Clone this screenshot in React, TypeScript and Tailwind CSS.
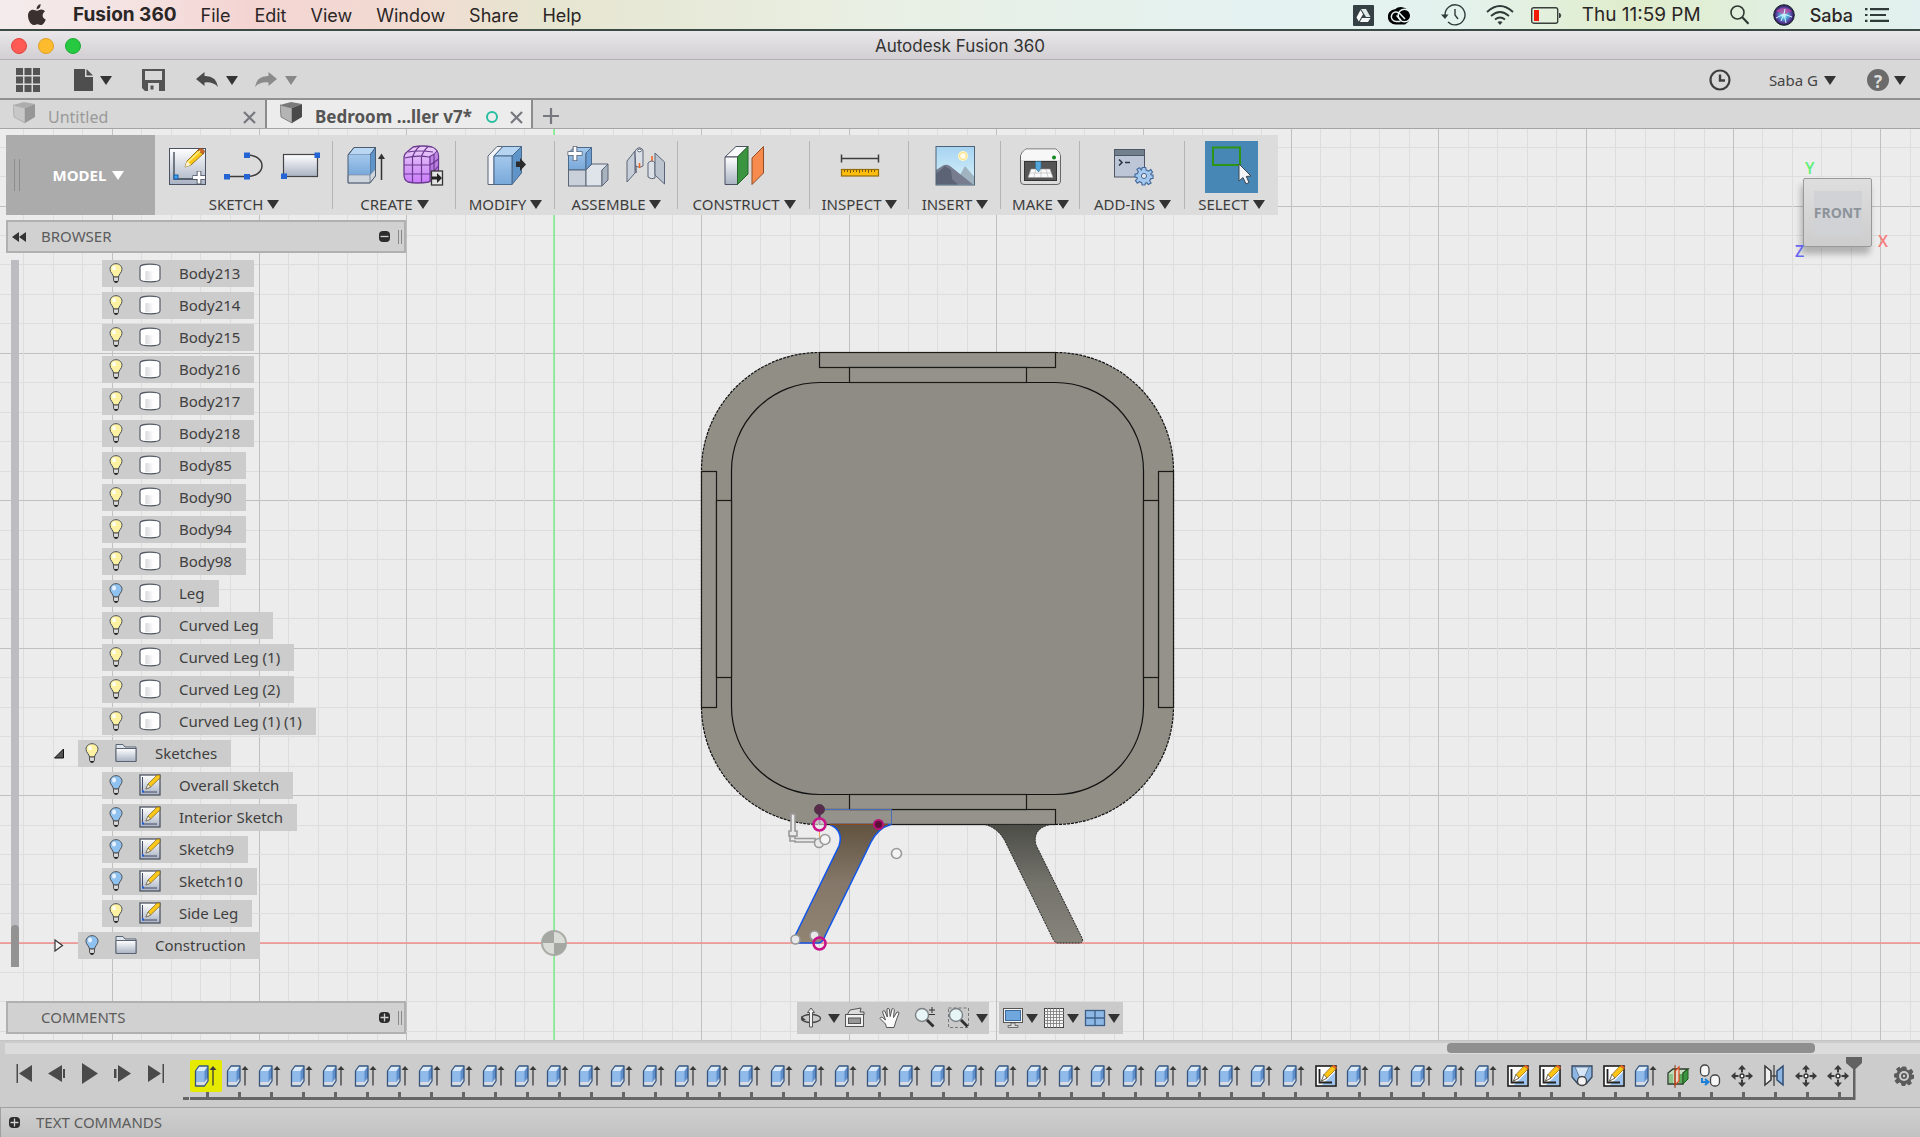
import type { ReactNode } from 'react'

const menus = ['File', 'Edit', 'View', 'Window', 'Share', 'Help']

type Row = { name: string; icon: 'body' | 'sketch' | 'folder'; on: boolean; open?: boolean }

const rows: Row[] = [
  { name: 'Body213', icon: 'body', on: true },
  { name: 'Body214', icon: 'body', on: true },
  { name: 'Body215', icon: 'body', on: true },
  { name: 'Body216', icon: 'body', on: true },
  { name: 'Body217', icon: 'body', on: true },
  { name: 'Body218', icon: 'body', on: true },
  { name: 'Body85', icon: 'body', on: true },
  { name: 'Body90', icon: 'body', on: true },
  { name: 'Body94', icon: 'body', on: true },
  { name: 'Body98', icon: 'body', on: true },
  { name: 'Leg', icon: 'body', on: false },
  { name: 'Curved Leg', icon: 'body', on: true },
  { name: 'Curved Leg (1)', icon: 'body', on: true },
  { name: 'Curved Leg (2)', icon: 'body', on: true },
  { name: 'Curved Leg (1) (1)', icon: 'body', on: true },
  { name: 'Sketches', icon: 'folder', on: true, open: true },
  { name: 'Overall Sketch', icon: 'sketch', on: false },
  { name: 'Interior Sketch', icon: 'sketch', on: false },
  { name: 'Sketch9', icon: 'sketch', on: false },
  { name: 'Sketch10', icon: 'sketch', on: false },
  { name: 'Side Leg', icon: 'sketch', on: true },
  { name: 'Construction', icon: 'folder', on: false, open: false },
]

const timeline = [
  ...Array(35).fill('extrude'),
  'sketch',
  ...Array(5).fill('extrude'),
  'sketch', 'sketch', 'loft', 'sketch', 'extrude', 'split', 'copy', 'move', 'mirror', 'move', 'move',
] as string[]

function Caret({ className = 'text-[#333]' }: { className?: string }) {
  return (
    <svg className={`shrink-0 ${className}`} width="12" height="9" viewBox="0 0 12 9" fill="currentColor">
      <path d="M0 0H12L6 9Z" />
    </svg>
  )
}

/* Shared gradients */
function Defs() {
  return (
    <svg className="absolute" width="0" height="0" aria-hidden="true">
      <defs>
        <linearGradient id="steel" x1="0" y1="0" x2="0" y2="1">
          <stop offset="0" stopColor="#ffffff" />
          <stop offset="1" stopColor="#a9b2c3" />
        </linearGradient>
        <linearGradient id="blue" x1="0" y1="0" x2="0" y2="1">
          <stop offset="0" stopColor="#a4c8ec" />
          <stop offset="1" stopColor="#78a8da" />
        </linearGradient>
        <linearGradient id="violet" x1="0" y1="0" x2="0" y2="1">
          <stop offset="0" stopColor="#ecd0fb" />
          <stop offset="0.6" stopColor="#d49bf7" />
          <stop offset="1" stopColor="#cc7cff" />
        </linearGradient>
        <linearGradient id="can" x1="0" y1="0" x2="1" y2="0">
          <stop offset="0.2" stopColor="#ffffff" />
          <stop offset="0.28" stopColor="#dcdce0" />
          <stop offset="0.7" stopColor="#ffffff" />
        </linearGradient>
        <linearGradient id="sky" x1="0" y1="0" x2="0" y2="1">
          <stop offset="0" stopColor="#a6d3f2" />
          <stop offset="1" stopColor="#d9f3f8" />
        </linearGradient>
        <linearGradient id="legSel" x1="0" y1="0" x2="0" y2="1">
          <stop offset="0" stopColor="#62533f" />
          <stop offset="0.5" stopColor="#85786a" />
          <stop offset="1" stopColor="#918471" />
        </linearGradient>
        <linearGradient id="leg" x1="0" y1="0" x2="0" y2="1">
          <stop offset="0" stopColor="#4d4d48" />
          <stop offset="0.5" stopColor="#74736c" />
          <stop offset="1" stopColor="#86847b" />
        </linearGradient>
        <radialGradient id="siri">
          <stop offset="0" stopColor="#e6f6ff" />
          <stop offset="0.35" stopColor="#4fb3dc" />
          <stop offset="0.75" stopColor="#5b3c9e" />
          <stop offset="1" stopColor="#1b1c3c" />
        </radialGradient>
      </defs>
    </svg>
  )
}

function Icon({ children, size = 40, box = 40 }: { children: ReactNode; size?: number; box?: number }) {
  return (
    <svg className="shrink-0 overflow-visible" width={size} height={size} viewBox={`0 0 ${box} ${box}`} fill="none">
      {children}
    </svg>
  )
}

const SketchIcon = () => (
  <Icon>
    <rect x="2.5" y="2.5" width="36" height="36" fill="url(#steel)" stroke="#4b5362" />
    <path d="M7 6V33H30" stroke="#39424f" strokeWidth="1.3" />
    <rect x="7" y="29" width="4" height="4" fill="#3aa0f5" stroke="#1c5ea8" />
    <path d="M18 21L20 15L32 3L37 7L24 19Z" fill="#fbc81a" stroke="#8d6a1e" strokeWidth="0.9" />
    <path d="M20 15L23 18M18 21L20 15L24 19Z" fill="#fff3cf" />
    <path d="M30.500 4.500L33 2.500Q36 2 37.500 5L36.500 8Z" fill="#d46a2a" stroke="#7c4b2b" strokeWidth="0.7" />
    <path d="M21 16L33 5" stroke="#fff08a" strokeWidth="1.4" />
    <path d="M32 25V38M25.500 31.500H38.500" stroke="#4b5362" strokeWidth="4.600" />
    <path d="M32 25.500V37.500M26 31.500H38" stroke="#fff" strokeWidth="2.800" />
  </Icon>
)

const SplineIcon = () => (
  <Icon>
    <path d="M3 30.500H23C43 30.500 43 9 23 9" stroke="#3c3c3c" strokeWidth="1.5" />
    <path d="M0 28H6V33.500H0ZM20 28H26V33.500H20ZM20 6.500H26V12H20Z" fill="#2564d4" />
  </Icon>
)

const RectIcon = () => (
  <Icon>
    <rect x="2.500" y="8.500" width="34" height="22" fill="url(#steel)" stroke="#444" strokeWidth="1.2" />
    <path d="M0 27.500H6V33H0ZM33.500 6.500H39V12H33.500Z" fill="#2564d4" />
  </Icon>
)

const ExtrudeIcon = () => (
  <Icon>
    <path d="M2 9L8 1.500H29.500L24 9Z" fill="#b9d7f3" stroke="#4b698a" />
    <path d="M24 9L29.500 1.500V28L24 36Z" fill="#5f94c9" stroke="#4b698a" />
    <rect x="2" y="9" width="22" height="20" fill="url(#blue)" />
    <path d="M2 29H24V37H2ZM24 29L29.500 23V30L24 37Z" fill="#cfd5dd" stroke="#7c8794" strokeWidth="0.6" />
    <path d="M2 9V37H24L29.500 30V1.500H8Z" stroke="#4b5b70" />
    <path d="M35.500 34V10" stroke="#333" strokeWidth="1.500" />
    <path d="M32 13L35.500 7.500L39 13Z" fill="#333" />
  </Icon>
)

const FormIcon = () => (
  <Icon>
    <path d="M1 12Q1 8 4 6L10 1Q20 -1 29 1Q35 3 35.500 10V24Q35 30 30 33L26 36Q14 38 5 36Q1 34 1 29Z" fill="url(#violet)" stroke="#6b3a8f" strokeWidth="1.300" />
    <path d="M26 11L35 6V26L27 35Z" fill="#a55fd6" opacity="0.55" />
    <path d="M1.500 12Q14 9 26 11Q32 8 34 5M1 19H27Q32 16 35.500 13M1 28H27Q32 25 35.500 20M9.500 36V11Q12 4 17 0M18.500 37V10Q21 4 25 0.500M27 36V11M31 33V8M5 6Q16 4 30 6" stroke="#6b3a8f" strokeWidth="1.200" />
    <rect x="28.500" y="25" width="11" height="14" fill="#e4e4e4" stroke="#333" strokeWidth="1.300" />
    <path d="M29 30.500H34V27L39 32L34 37V33.500H29Z" fill="#222" />
  </Icon>
)

const ModifyIcon = () => (
  <Icon>
    <path d="M2 10L11 0.500H17L8 10V38.500H2Z" fill="#f2f4f7" stroke="#5a6577" />
    <path d="M8 10L17 0.500H35.500L26 10Z" fill="#b5d4f1" stroke="#4b698a" />
    <path d="M26 10L35.500 0.500V27L26 38.500Z" fill="#5f94c9" stroke="#4b698a" />
    <path d="M8 10H26V38.500H8Z" fill="url(#blue)" stroke="#4b698a" />
    <path d="M30 15.500H34V12L40 18.500L34 25V21H30Z" fill="#2b2b2b" />
  </Icon>
)

const AssembleIcon = () => (
  <Icon>
    <path d="M0.500 7L6 1.500H23.500L18 7V24H0.500Z" fill="url(#blue)" stroke="#4b698a" />
    <path d="M18 7L23.500 1.500V18L18 24Z" fill="#6c9fd3" stroke="#4b698a" />
    <rect x="0.500" y="24" width="17.500" height="16" fill="#c9d0da" stroke="#5a6577" />
    <path d="M18 24L24 18H40L34 24V40H18Z" fill="#dfe3ea" stroke="#5a6577" />
    <path d="M34 24L40 18V34L34 40Z" fill="#a9b2bf" stroke="#5a6577" />
    <path d="M7 0V15M-0.500 7.500H14.500" stroke="#5a6577" strokeWidth="4.600" />
    <path d="M7 0.800V14.200M0.300 7.500H13.700" stroke="#fff" strokeWidth="2.800" />
  </Icon>
)

const JointIcon = () => (
  <Icon>
    <path d="M2 15L10 5V27L2 36Z" fill="#c7ced8" stroke="#5a6577" />
    <path d="M10 5Q14 -1 18 4V20Q14 23 11 20V27L10 5Z" fill="#dbe0e7" stroke="#5a6577" />
    <ellipse cx="14.500" cy="4.500" rx="2" ry="1.300" fill="#fff" stroke="#5a6577" />
    <path d="M14.500 17V22M27 10V17" stroke="#f26a21" strokeWidth="1.600" />
    <path d="M23 17Q27 13 30 17V32Q26 34 23 31Z" fill="#dbe0e7" stroke="#5a6577" />
    <path d="M30 7L39.500 16V38L30 29Z" fill="#bcc4cf" stroke="#5a6577" />
  </Icon>
)

const ConstructIcon = () => (
  <Icon>
    <path d="M1 11L12 0.500H24L13.500 11Z" fill="#fafbfc" stroke="#4a5160" />
    <path d="M1 11H13.500V38.500H1Z" fill="url(#steel)" stroke="#4a5160" />
    <path d="M13.500 11L24 0.500V28L13.500 38.500Z" fill="#3b9440" stroke="#27642c" />
    <path d="M28 12L39.500 0.500V27L28 38.500Z" fill="#f68b4d" stroke="#8f4c26" />
  </Icon>
)

const InspectIcon = () => (
  <Icon>
    <path d="M1.500 12.500H38.500M1.500 8.500V16.500M38.500 8.500V16.500" stroke="#3d3d3d" strokeWidth="1.500" />
    <rect x="1.500" y="23.500" width="37" height="6.500" fill="#fdbd0c" stroke="#946c10" strokeWidth="1.200" />
    <path d="M4.500 24V26M7.500 24V26M10.500 24V27M13.500 24V26M16.500 24V26M19.500 24V27M22.500 24V26M25.500 24V26M28.500 24V27M31.500 24V26M34.500 24V26" stroke="#7a5a12" />
  </Icon>
)

const InsertIcon = () => (
  <Icon>
    <rect x="1" y="0.500" width="38.500" height="38.500" fill="url(#sky)" />
    <circle cx="28" cy="10" r="5" fill="#fff6c4" />
    <circle cx="28" cy="10" r="3.500" fill="#fffbe6" stroke="#f7dc7a" />
    <path d="M20 38L30 20L39.500 31V38.500Z" fill="#9fb3c1" />
    <path d="M1 24L9 19Q12 18 15 20L38 38.500H1Z" fill="#777d8f" />
    <path d="M1 28L10 20L16 24L17 33L23 38.500H1Z" fill="#5c6375" />
    <rect x="1" y="0.500" width="38.500" height="38.500" stroke="#4d6378" />
  </Icon>
)

const MakeIcon = () => (
  <Icon>
    <path d="M-0.500 10Q0 6 5 3H35Q39 6 39.500 10V35Q39.500 38.500 36 38.500H3Q-0.500 38.500 -0.500 35Z" fill="#dcdcdc" stroke="#666" />
    <path d="M0 10Q1 6 5 3.500H35Q38.500 6 39 10V14H0Z" fill="#f7f7f7" />
    <circle cx="33" cy="11.500" r="2" fill="#108a1e" />
    <rect x="3.500" y="15.500" width="32" height="19" fill="#555" stroke="#333" />
    <path d="M10 23H29L32 31.500H7Z" fill="#fafafa" stroke="#999" strokeWidth="0.600" />
    <path d="M15 23L13 31M20 23V31M25 23L27 31M9 27H30" stroke="#bbb" strokeWidth="0.700" />
    <path d="M14.500 15.500H20V22L17.500 26L14.500 22Z" fill="#55a8dc" stroke="#2d6f9b" strokeWidth="0.600" />
  </Icon>
)

const GEAR = 'M-1.800 -9H1.800L2.300 -6.300L4.800 -5.200L7.200 -6.700L9 -4L7 -2L7.500 -1L9.500 -1V2.500L7 3L6 5L7.500 7.300L4.500 9L3 7L1.500 7.500L1 9.500H-2L-2.500 7L-4.700 6L-7 7.500L-9 4.800L-7 2.800L-7.300 1.500L-9.500 1V-2L-7 -2.500L-6 -4.700L-7.500 -7L-4.800 -8.800L-2.800 -6.500Z'

const AddInsIcon = () => (
  <Icon>
    <rect x="1.500" y="3.500" width="30" height="27.500" fill="#bcc6d7" stroke="#4d5665" />
    <rect x="1.500" y="3.500" width="30" height="6" fill="#727f8d" stroke="#4d5665" />
    <path d="M6 13.500L9 16.500L6 19.500M12 16.500H17" stroke="#2d3542" strokeWidth="1.600" />
    <path transform="translate(31 30) scale(0.95)" d={GEAR} fill="#a5c8ee" stroke="#44699a" strokeWidth="1.200" />
    <circle cx="31" cy="30" r="2.600" fill="#e6e6e6" stroke="#44699a" />
  </Icon>
)

const SelectIcon = () => (
  <span className="grid size-full place-items-center bg-[#4787b5]">
    <Icon>
      <rect x="1" y="0.500" width="27" height="17.500" stroke="#2c9614" strokeWidth="2" />
      <path d="M27 17V34L31 30.500L34 37L37 35.500L34.300 29.500L39 29Z" fill="#f2f4f8" stroke="#3c4654" />
    </Icon>
  </span>
)

const groups: { label: string; width: string; icons: ReactNode[] }[] = [
  { label: 'SKETCH', width: 'w-[178px]', icons: [<SketchIcon />, <SplineIcon />, <RectIcon />] },
  { label: 'CREATE', width: 'w-[123px]', icons: [<ExtrudeIcon />, <FormIcon />] },
  { label: 'MODIFY', width: 'w-[99px]', icons: [<ModifyIcon />] },
  { label: 'ASSEMBLE', width: 'w-[123px]', icons: [<AssembleIcon />, <JointIcon />] },
  { label: 'CONSTRUCT', width: 'w-[132px]', icons: [<ConstructIcon />] },
  { label: 'INSPECT', width: 'w-[99px]', icons: [<InspectIcon />] },
  { label: 'INSERT', width: 'w-[92px]', icons: [<InsertIcon />] },
  { label: 'MAKE', width: 'w-[79px]', icons: [<MakeIcon />] },
  { label: 'ADD-INS', width: 'w-[105px]', icons: [<AddInsIcon />] },
]

function MenuBar() {
  return (
    <nav className="flex h-[31px] shrink-0 items-center border-b-2 border-[#3b4a45] bg-[linear-gradient(90deg,#f3ecec_0%,#f4e2e1_7%,#f4d4d2_13%,#f1dcd2_22%,#e6e5d0_28%,#e9efe3_45%,#e4f2f1_66%,#e4f2ee_76%,#e0edcb_85%,#e0efdf_92%,#e2f1ef_100%)] pt-px pr-[30px] pl-7 font-['Inter',sans-serif] text-[18px] text-[#2b2626]">
      <button aria-label="Apple menu">
        <svg width="18" height="22" viewBox="0 0 18 22" fill="#3a3030">
          <path d="M12.600 0Q12.800 4.800 8.600 5.400Q8.400 1.200 12.600 0ZM9 6.800C10.500 6.800 11.500 5.600 13.300 5.600C15 5.600 16.300 6.500 17 7.600C13.600 9.600 14 14.200 17.700 15.600C17 18 15.200 21 13.300 21C11.800 21 11.200 20.200 9.500 20.200C7.700 20.200 7 21 5.600 21C2.800 21 0 16 0 11.800C0 8 2.300 5.800 4.900 5.800C6.600 5.800 7.900 6.800 9 6.800Z" />
        </svg>
      </button>
      <button className="ml-[27px] text-[19px] font-bold">Fusion 360</button>
      <div className="ml-6 flex gap-6">
        {menus.map((m) => (
          <button key={m}>{m}</button>
        ))}
      </div>
      <div className="ml-auto flex items-center">
        <svg width="21" height="21" viewBox="0 0 21 21">
          <rect width="21" height="21" rx="1" fill="#344044" />
          <path d="M8 4H13L17.500 12H13Z" fill="#dfe9e8" />
          <path d="M7.500 5L10 9.300L5.800 16.500L3.500 12.500Z" fill="#fff" />
          <path d="M9 13H17.500L15 17H6.800Z" fill="#f3f8f7" />
        </svg>
        <svg className="ml-3.5" width="26" height="19" viewBox="0 0 26 19" fill="none">
          <path d="M8 18.500A7.500 7.500 0 0 1 7 3.200A9.200 9.200 0 1 1 17 18.500Z" fill="#000" />
          <circle cx="16.500" cy="9.500" r="6.300" stroke="#e8f4f4" strokeWidth="1.500" />
          <path d="M12.500 15.500H8.200A4.800 4.800 0 1 1 11.500 7.300L17 13" stroke="#e8f4f4" strokeWidth="1.500" />
          <path d="M8.500 9.500L13 14" stroke="#e8f4f4" strokeWidth="1.500" />
        </svg>
        <svg className="ml-[27px]" width="25" height="22" viewBox="0 0 25 22" fill="none" stroke="#2f3a39" strokeWidth="1.400">
          <path d="M4 11A10 10 0 1 1 7 18" />
          <path d="M14 5V11L17 15" />
          <path d="M0 10.500H7.500L4 15Z" fill="#2f3a39" stroke="none" />
        </svg>
        <svg className="ml-5" width="28" height="20" viewBox="0 0 28 20" fill="none" stroke="#2f3a39" strokeWidth="1.800">
          <path d="M1 7Q14 -5 27 7M5 11Q14 3 23 11M9 14.500Q14 10.500 19 14.500" />
          <path d="M11.500 17Q14 15.500 16.500 17L14 20Z" fill="#2f3a39" stroke="none" />
        </svg>
        <svg className="ml-[17px]" width="31" height="17" viewBox="0 0 31 17" fill="none">
          <rect x="0.700" y="0.700" width="26" height="15.500" rx="2" stroke="#3a3f3c" strokeWidth="1.400" />
          <rect x="3" y="3" width="5" height="11" fill="#f31a08" />
          <path d="M28.500 6Q31 8.500 28.500 11Z" fill="#3a3f3c" stroke="#3a3f3c" />
        </svg>
        <span className="ml-5 text-[19px]">Thu 11:59 PM</span>
        <svg className="ml-[29px]" width="20" height="20" viewBox="0 0 20 20" fill="none" stroke="#2f3a33">
          <circle cx="7.500" cy="7.500" r="6.500" strokeWidth="1.600" />
          <path d="M12.300 12.300L18.500 18.800" strokeWidth="2.200" />
        </svg>
        <svg className="ml-[23px]" width="22" height="22" viewBox="0 0 22 22">
          <circle cx="11" cy="11" r="10.300" fill="url(#siri)" stroke="#1d2630" />
          <path d="M3 7Q11 1 19 7L11 11Z" fill="#c9479f" opacity="0.700" />
          <path d="M3 14L11 10L19 13M11 10L13 19M11 10L8 17M11 10L12 5" stroke="#c9f6ff" fill="none" />
        </svg>
        <button className="ml-[15px] font-medium">Saba</button>
        <svg className="ml-3" width="25" height="14" viewBox="0 0 25 14" stroke="#2f3a39" strokeWidth="2.200">
          <path d="M0 1.200H2.500M0 7H2.500M0 12.800H2.500M5 1.200H24M5 7H21M5 12.800H24" />
        </svg>
      </div>
    </nav>
  )
}

function TitleBar() {
  return (
    <header className="relative flex h-[29px] shrink-0 items-center justify-center border-b border-[#b1b1b1] bg-linear-to-b from-[#e9e7e9] to-[#d1cfd1] pt-0.5">
      <div className="absolute left-[11px] flex gap-[11px]">
        <button aria-label="Close" className="size-4 rounded-full border border-[#e0443e] bg-[#ff5b54]" />
        <button aria-label="Minimize" className="size-4 rounded-full border border-[#dfa023] bg-[#fdbb2d]" />
        <button aria-label="Zoom" className="size-4 rounded-full border border-[#1faa35] bg-[#26c940]" />
      </div>
      <h1 className="font-['Inter',sans-serif] text-[17px] leading-6 text-[#333]">Autodesk Fusion 360</h1>
    </header>
  )
}

function QuickBar() {
  return (
    <div className="flex h-[38px] shrink-0 items-center bg-[#d8d8d8] pt-0.5 pr-3.5 pl-4">
      <button aria-label="Show data panel">
        <svg width="24" height="24" viewBox="0 0 24 24" fill="#545454">
          <path d="M0 0H7V7H0ZM8.500 0H15.500V7H8.500ZM17 0H24V7H17ZM0 8.500H7V15.500H0ZM8.500 8.500H15.500V15.500H8.500ZM17 8.500H24V15.500H17ZM0 17H7V24H0ZM8.500 17H15.500V24H8.500ZM17 17H24V24H17Z" />
        </svg>
      </button>
      <button aria-label="File" className="ml-[34px] flex items-center gap-[7px]">
        <svg width="19" height="22" viewBox="0 0 19 22" fill="#4e4e4e">
          <path d="M0 0H11V8H19V22H0ZM12.500 0L19 6.500H12.500Z" />
        </svg>
        <Caret />
      </button>
      <button aria-label="Save" className="ml-[30px]">
        <svg width="23" height="22" viewBox="0 0 23 22">
          <path fillRule="evenodd" fill="#545454" d="M0 0H23V22H3L0 19ZM3 2V11H20V2ZM6 14V22H17V14ZM8 16H11V20H8Z" />
          <path d="M6.500 14.500H16.500V21H6.500Z" fill="#d8d8d8" />
          <path d="M8.500 16.500H11.500V20.500H8.500Z" fill="#545454" />
        </svg>
      </button>
      <button aria-label="Undo" className="ml-[31px] flex items-center gap-2">
        <svg width="22" height="16" viewBox="0 0 22 16" fill="#4a4a4a">
          <path d="M0 7L8.500 0V4Q20 3.500 22 15Q17 9.500 8.500 10.500V14Z" />
        </svg>
        <Caret />
      </button>
      <button aria-label="Redo" className="ml-[17px] flex items-center gap-2">
        <svg width="22" height="16" viewBox="0 0 22 16" fill="#8b8b8b">
          <path d="M22 7L13.500 0V4Q2 3.500 0 15Q5 9.500 13.500 10.500V14Z" />
        </svg>
        <Caret className="text-[#888]" />
      </button>
      <button aria-label="Job status" className="ml-auto">
        <svg width="22" height="22" viewBox="0 0 22 22" fill="none" stroke="#3f3f3f">
          <circle cx="11" cy="11" r="9.500" strokeWidth="2.200" />
          <path d="M11 5.500V11.500H16" strokeWidth="2.400" />
        </svg>
      </button>
      <button className="ml-[38px] flex items-center gap-[6px] text-[15px] text-[#444]">
        Saba G <Caret />
      </button>
      <button aria-label="Help" className="ml-[31px] flex items-center gap-[5px]">
        <span className="grid size-[22px] place-items-center rounded-full bg-[#6b6b6b] text-[17px] font-bold text-[#dedede]">?</span>
        <Caret />
      </button>
    </div>
  )
}

function Cube({ faded }: { faded?: boolean }) {
  return (
    <svg className={faded ? 'opacity-45' : ''} width="23" height="22" viewBox="0 0 23 22">
      <path d="M0 3L11 0L22 2L12 6Z" fill="#7a7a7a" />
      <path d="M0 3L12 6V21L1 15Z" fill="#b4b4b4" stroke="#666" strokeWidth="0.700" />
      <path d="M12 6L22 2V15L12 21Z" fill="#4a4a4a" />
    </svg>
  )
}

function Cross() {
  return (
    <svg width="13" height="13" viewBox="0 0 13 13" stroke="#77777f" strokeWidth="2.200">
      <path d="M1 1L12 12M12 1L1 12" />
    </svg>
  )
}

function Tabs() {
  return (
    <div role="tablist" className="flex h-[31px] shrink-0 border-t-2 border-b border-t-[#909090] border-b-[#a5a5a5] bg-[#d8d8d8] text-[16px]">
      <div className="flex w-[267px] items-center border-r-2 border-[#8c8c8c] pt-[6px] pr-[9px] pl-[13px] text-[#9a9a9a]">
        <span className="-mt-2"><Cube faded /></span>
        <button role="tab" aria-selected="false" className="ml-3">Untitled</button>
        <button aria-label="Close Untitled" className="ml-auto"><Cross /></button>
      </div>
      <div className="flex w-[266px] items-center border-r-2 border-[#8c8c8c] bg-[#ececec] pt-[6px] pr-2 pl-[13px] text-[#555]">
        <span className="-mt-2"><Cube /></span>
        <button role="tab" aria-selected="true" className="ml-3 text-[17px] leading-5 font-bold whitespace-nowrap">Bedroom ...ller v7*</button>
        <span className="ml-auto size-3 rounded-full border-2 border-[#28bfa0]" />
        <button aria-label="Close Bedroom" className="ml-3"><Cross /></button>
      </div>
      <button aria-label="New tab" className="ml-[10px] pt-1 text-[#77777f]">
        <svg width="16" height="16" viewBox="0 0 16 16" stroke="currentColor" strokeWidth="2.200">
          <path d="M8 0V16M0 8H16" />
        </svg>
      </button>
    </div>
  )
}

function Ribbon() {
  return (
    <div className="flex h-20 w-fit bg-[#dcdcdc] text-[15px] text-[#3c3c3c]">
      <button className="relative flex w-[149px] items-center justify-center gap-[6px] bg-[#ababab] font-bold text-white">
        <span className="absolute left-2 h-8 w-[6px] border-x border-[#8c8c8c]" />
        <span className="pl-4">MODEL</span>
        <Caret className="text-white" />
      </button>
      {groups.map((g) => (
        <div key={g.label} className={`relative flex flex-col items-center ${g.width}`}>
          <div className="flex h-[62px] items-center gap-[17px]">
            {g.icons.map((icon, i) => (
              <button key={i} aria-label={`${g.label} tool ${i + 1}`}>{icon}</button>
            ))}
          </div>
          <button className="-mt-[3px] flex h-5 items-center gap-1 leading-5">
            {g.label} <Caret />
          </button>
          <span className="absolute top-[6px] right-0 h-[68px] w-px bg-[#b4b4b4]" />
        </div>
      ))}
      <div className="flex w-[93px] flex-col items-center">
        <button aria-label="Select tool" className="mt-[6px] h-[52px] w-[53px]"><SelectIcon /></button>
        <button className="mt-px flex h-5 items-center gap-1 leading-5">SELECT <Caret /></button>
      </div>
    </div>
  )
}

function Bulb({ on }: { on: boolean }) {
  return (
    <svg width="14" height="20" viewBox="0 0 14 20">
      <path d="M7 0.700C10.500 0.700 13 3.200 13 6.300C13 9.500 9.800 11 9.500 14H4.500C4.200 11 1 9.500 1 6.300C1 3.200 3.500 0.700 7 0.700Z" fill={on ? '#fdf2a2' : '#8fc2f0'} stroke="#4a4f57" />
      <ellipse cx="5" cy="5" rx="2" ry="2.500" fill="#fff" opacity="0.800" />
      <path d="M4.500 14H9.500V17L8.500 19H5.500L4.500 17Z" fill="#d8d8d8" stroke="#444" strokeWidth="0.900" />
      <path d="M5 18H9L8 19.700H6Z" fill="#222" />
    </svg>
  )
}

function RowIcon({ icon }: { icon: Row['icon'] }) {
  if (icon === 'body')
    return (
      <svg width="22" height="20" viewBox="0 0 22 20">
        <path d="M1 4C1 0.200 21 0.200 21 4V16C21 19.800 1 19.800 1 16Z" fill="#fff" stroke="#555b66" strokeWidth="1.200" />
        <path d="M2 7Q11 9.500 20 7V16Q11 19 2 16Z" fill="url(#can)" />
      </svg>
    )
  if (icon === 'folder')
    return (
      <svg width="22" height="20" viewBox="0 0 22 20">
        <path d="M1 5V1.500H8L10 4H21V18.500H1Z" fill="#dfe3ea" stroke="#5b6475" />
        <path d="M1 5.500H21V18.500H1Z" fill="url(#steel)" stroke="#5b6475" />
      </svg>
    )
  return (
    <svg width="22" height="22" viewBox="0 0 22 22" fill="none">
      <rect x="1" y="1" width="20" height="20" fill="url(#steel)" stroke="#4f5663" strokeWidth="1.300" />
      <path d="M3.500 3V18H18" stroke="#424a66" />
      <path d="M3 16.500H5V18.500H3Z" fill="#1d5fe0" />
      <path d="M7 15L9 10L18 1H21V4L11 13.500Z" fill="#fbc81a" stroke="#7a6020" strokeWidth="0.700" />
      <path d="M7 15L9 10L11.500 13Z" fill="#fff6dd" stroke="#555" strokeWidth="0.600" />
    </svg>
  )
}

function PanelHeader({ title, open }: { title: string; open?: boolean }) {
  return (
    <div className="relative flex h-[33px] items-center border-2 border-[#b0b0b0] bg-[#d1d1d1] pr-[14px] pl-[33px] text-[15px] text-[#5c5c5c]">
      {open && (
        <svg className="absolute left-1" width="14" height="10" viewBox="0 0 14 10" fill="#333">
          <path d="M0 5L7 0V10ZM7 5L14 0V10Z" />
        </svg>
      )}
      <h2>{title}</h2>
      <button aria-label={`Toggle ${title}`} className="ml-auto">
        <RoundToggle minus={open} />
      </button>
      <span className="absolute right-0.5 h-3.5 w-1 border-x border-[#888]" />
    </div>
  )
}

function RoundToggle({ minus }: { minus?: boolean }) {
  return (
    <svg width="11" height="11" viewBox="0 0 11 11">
      <rect width="11" height="11" rx="4" fill="#2c2c2c" />
      <path d={minus ? 'M1.500 5.500H9.500' : 'M1.500 5.500H9.500M5.500 1.500V9.500'} stroke="#d1d1d1" strokeWidth="1.300" />
    </svg>
  )
}

function Browser() {
  return (
    <section className="w-[400px]">
      <PanelHeader title="BROWSER" open />
      <div className="mt-[7px] flex">
        <div className="-mb-2 ml-[5px] flex w-2 flex-col justify-end bg-[#bdbdc1]">
          <div className="h-[42px] rounded-t bg-[#939393]" />
        </div>
        <ul className="ml-[35px] flex flex-col gap-[5px] text-[15px] text-[#3f3f3f]">
          {rows.map((r) => (
            <li key={r.name} className="flex h-[27px] items-center">
              <span className="w-6">
                {r.icon === 'folder' && (
                  <button aria-label={`Expand ${r.name}`} className="block">
                    <svg width="10" height="13" viewBox="0 0 10 13">
                      {r.open ? (
                        <path d="M0.500 11L9.500 2V11Z" fill="#555" stroke="#111" />
                      ) : (
                        <path d="M1 1L8.500 6.500L1 12Z" fill="#f4f4f4" stroke="#333" strokeWidth="1.200" />
                      )}
                    </svg>
                  </button>
                )}
              </span>
              <div className={`flex h-full items-center bg-[#cccccc] pr-[14px] pb-px pl-[7px] ${r.icon === 'folder' ? '' : 'ml-6'}`}>
                <Bulb on={r.on} />
                <span className="ml-4 w-10"><RowIcon icon={r.icon} /></span>
                <span className="whitespace-nowrap">{r.name}</span>
              </div>
            </li>
          ))}
        </ul>
      </div>
    </section>
  )
}

const STEP = 29.48
const OX = 554.3
const OY = 943

function Grid() {
  const lines: ReactNode[] = []
  for (let i = -60; i <= 100; i++) {
    const major = i % 5 === 0
    const x = Math.floor(OX + i * STEP) + 0.5
    const y = Math.floor(OY + i * STEP) + 0.5
    const stroke = major ? '#c0c0c0' : '#dddddd'
    lines.push(<path key={`v${i}`} d={`M${x} 0V3000`} stroke={stroke} />)
    if (i < 40) lines.push(<path key={`h${i}`} d={`M0 ${y}H4000`} stroke={stroke} />)
  }
  return <>{lines}</>
}

function Model() {
  return (
    <svg className="absolute inset-0 size-full" fill="none">
      <g transform="translate(0 -129)">
        <Grid />
        <path d="M554 0V3000" stroke="#7cf08a" strokeWidth="1.500" />
        <path d="M0 943H4000" stroke="#f59090" strokeWidth="1.500" />
        {/* origin */}
        <circle cx="554" cy="943" r="12" fill="#d9dcd7" stroke="#a9aca7" strokeWidth="2" />
        <path d="M554 943V931A12 12 0 0 0 542 943ZM554 943V955A12 12 0 0 0 566 943Z" fill="#a4a7a2" />
        {/* cabinet */}
        <rect x="701.500" y="352.500" width="472" height="472" rx="118" fill="#908e85" stroke="#111" strokeWidth="1.200" strokeDasharray="3 1" />
        <rect x="731.500" y="382.500" width="412" height="412" rx="88" fill="#8e8c84" stroke="#111" strokeWidth="1.200" />
        <g fill="#94928a" stroke="#1a1a17" strokeWidth="1.200">
          <rect x="819.500" y="352.500" width="236" height="15" />
          <rect x="849.500" y="367.500" width="177" height="15" />
          <rect x="701.500" y="471.500" width="15" height="236" />
          <rect x="716.500" y="500.500" width="15" height="177" />
          <rect x="1158.500" y="471.500" width="15" height="236" />
          <rect x="1143.500" y="500.500" width="15" height="177" />
          <rect x="819.500" y="809.500" width="236" height="15" />
          <rect x="849.500" y="794.500" width="177" height="15" />
        </g>
        {/* legs */}
        <path d="M985 824.500Q998 828 1005 841L1053 939Q1055 943 1058 943H1080Q1084 942 1082 938L1036 845Q1032 829 1050 824.500Z" fill="url(#leg)" stroke="#222" strokeDasharray="2 1" />
        <path d="M830 824.500Q844 831 839 846L795 936Q792 943 798 943H819Q823 942 825 936L871 842Q878 828 891 824.500Z" fill="url(#legSel)" stroke="#1257ea" strokeWidth="1.600" />
        <path d="M830 824.500H888" stroke="#8a4a12" strokeWidth="1.600" />
        <path d="M819.500 809.500H891.500V824.500" stroke="#4a6bb8" />
        <path d="M819.500 810V824" stroke="#5a1f60" strokeWidth="2" />
        <path d="M819.500 830V842" stroke="#f0a060" />
        {/* sketch points */}
        <g stroke="#999" strokeWidth="1.600" fill="#e9e9e9">
          <path d="M791 814H795V831H797V836H789V831H791ZM790 836.500H795V838.500H815V842H795V841H790Z" />
          <circle cx="819" cy="843" r="4.500" />
          <circle cx="825" cy="839.500" r="5" fill="#f4f4f4" />
          <circle cx="896.500" cy="853.500" r="5" fill="#f4f4f4" />
          <circle cx="795.500" cy="939.500" r="4.500" />
          <circle cx="814.500" cy="935.500" r="4.500" />
        </g>
        <circle cx="819.500" cy="809.500" r="5" fill="#5a2a4a" stroke="#493c48" />
        <circle cx="878.500" cy="824.500" r="4.500" fill="#5c1038" stroke="#b8127a" strokeWidth="2" />
        <circle cx="819.500" cy="824.500" r="6" fill="#ececec" fillOpacity="0.600" stroke="#c8128a" strokeWidth="2.500" />
        <circle cx="819.500" cy="943.500" r="6" stroke="#c8128a" strokeWidth="2.500" />
      </g>
    </svg>
  )
}

function ViewCube() {
  return (
    <div className="absolute top-[49px] right-12 font-['Open_Sans',sans-serif]">
      <div className="grid size-[69px] place-items-center rounded-xs border border-[#999] bg-linear-to-b from-[#dedede] to-[#cdcdcd] shadow-[-2px_7px_6px_rgba(0,0,0,0.25)]">
        <span className="grid h-11 w-12 place-items-center bg-[#d0d2d6] text-[14px] font-bold text-[#8d939a]">FRONT</span>
      </div>
      <span className="absolute -top-5 left-0.5 text-[16px] leading-5 font-semibold text-[#5ff078]">Y</span>
      <span className="absolute -right-4 bottom-[-4px] text-[16px] leading-5 font-semibold text-[#f77c7c]">X</span>
      <span className="absolute bottom-[-14px] -left-2 text-[16px] leading-5 font-semibold text-[#6666f0]">Z</span>
    </div>
  )
}

function Magnifier({ children }: { children?: ReactNode }) {
  return (
    <Icon size={22} box={22}>
      {children}
      <circle cx="8" cy="8" r="6.500" fill="#e8f5f7" stroke="#7b8084" strokeWidth="1.400" />
      <path d="M13 13L19.500 19.500" stroke="#2f2f2f" strokeWidth="2.800" />
    </Icon>
  )
}

function NavBar() {
  return (
    <div className="absolute bottom-[6px] left-1/2 flex -translate-x-1/2 gap-[10px]">
      <div className="flex h-8 w-[192px] items-center bg-[#cacaca] pl-[3px]">
        <button aria-label="Orbit" className="flex items-center gap-[6px]">
          <Icon size={22} box={22}>
            <ellipse cx="11" cy="11.500" rx="9.500" ry="4" stroke="#444" strokeWidth="1.300" />
            <path d="M11 1L14.500 5.500H12.500V20H9.500V5.500H7.500Z" fill="#f1f1f1" stroke="#555" />
            <path d="M2 14L1 9L6 13Z" fill="#444" />
          </Icon>
          <Caret />
        </button>
        <button aria-label="Look at" className="ml-1">
          <Icon size={22} box={22}>
            <path d="M3 8L6 3L17 1L16 5H20V8" fill="#ddd" stroke="#555" />
            <rect x="1.500" y="7.500" width="18" height="12" fill="#f1f1f1" stroke="#555" />
            <rect x="4.500" y="11" width="12" height="5.500" fill="#999" stroke="#555" />
          </Icon>
        </button>
        <button aria-label="Pan" className="ml-[13px]">
          <Icon size={22} box={22}>
            <path d="M7.500 20.500L6.500 17L1 11.500Q1.500 9.500 3.500 10.500L6.500 13L3.500 5Q4 3 5.800 4L8.300 10L8 2Q9 0.500 10.300 2L11.200 9.500L13 2Q14.500 0.800 15.300 2.500L14.500 10.500L18 5Q19.800 4.500 20 6L17 14L15 20.500Z" fill="#fafafa" stroke="#555" />
          </Icon>
        </button>
        <button aria-label="Zoom" className="ml-[13px]">
          <Magnifier><path d="M18 0V6M15 3H21M15 7.500H21" stroke="#333" /></Magnifier>
        </button>
        <button aria-label="Fit" className="ml-3 flex items-center gap-[6px]">
          <Magnifier><path d="M0.500 1H20.500V20.500H0.500Z" stroke="#777" strokeDasharray="3 2" /></Magnifier>
          <Caret />
        </button>
      </div>
      <div className="flex h-8 w-[124px] items-center gap-[5px] bg-[#cacaca] pl-[3px]">
        <button aria-label="Display settings" className="flex items-center gap-0.5">
          <Icon size={22} box={22}>
            <rect x="1.500" y="1.500" width="19" height="14" fill="#f4f4f4" stroke="#555" />
            <rect x="3.500" y="3.500" width="15" height="10" fill="#6fa6de" stroke="#3b6a9c" />
            <path d="M9 16H13V18.500H16V20.500H6V18.500H9Z" fill="#ddd" stroke="#555" strokeWidth="0.800" />
          </Icon>
          <Caret />
        </button>
        <button aria-label="Grid settings" className="flex items-center gap-0.5">
          <Icon size={22} box={22}>
            <rect x="1.500" y="1.500" width="19" height="19" fill="#f6f6f6" stroke="#444" />
            <path d="M4.500 1V21M7.500 1V21M10.500 1V21M13.500 1V21M16.500 1V21M1 4.500H21M1 7.500H21M1 10.500H21M1 13.500H21M1 16.500H21" stroke="#777" strokeWidth="0.800" />
          </Icon>
          <Caret />
        </button>
        <button aria-label="Viewports" className="flex items-center gap-0.5">
          <Icon size={22} box={22}>
            <rect x="1.500" y="3.500" width="19" height="15" fill="#8db8e5" stroke="#3c5f86" strokeWidth="1.300" />
            <path d="M11 3V19M1 11H21" stroke="#3c5f86" strokeWidth="1.300" />
          </Icon>
          <Caret />
        </button>
      </div>
    </div>
  )
}

function Feature({ kind }: { kind: string }) {
  switch (kind) {
    case 'sketch':
      return (
        <Icon size={24} box={24}>
          <rect x="2" y="2" width="20" height="20" fill="#fff" stroke="#1c1c1c" strokeWidth="1.600" />
          <path d="M8 21L21 8V21Z" fill="#9dc4ee" />
          <path d="M5.500 5V18.500H18" stroke="#222" strokeWidth="1.800" />
          <path d="M7.500 17L10 10.500L18 2L22 5L13 14Z" fill="#fbc512" stroke="#8a5c10" strokeWidth="0.700" />
          <path d="M18 2L20 1L23 3.500L22 5Z" fill="#f0641e" />
          <path d="M7.500 17L10 10.500L13 14Z" fill="#fff" stroke="#333" strokeWidth="0.600" />
        </Icon>
      )
    case 'loft':
      return (
        <Icon size={24} box={24}>
          <path d="M2 2H22V13L16 20H8L2 13Z" fill="#8db5e2" stroke="#33475f" strokeWidth="1.300" />
          <path d="M5 3H19L14.500 13H9.500Z" fill="#d5e6f7" stroke="#56728f" strokeWidth="0.800" />
          <circle cx="12" cy="17" r="4.500" fill="#f3f3f3" stroke="#444" strokeWidth="1.300" />
        </Icon>
      )
    case 'split':
      return (
        <Icon size={24} box={24}>
          <path d="M2 9L7 5H22L17 9V20H2Z" fill="#c5dcc0" stroke="#2a3a2a" strokeWidth="1.300" />
          <path d="M17 9L22 5V15L17 20Z" fill="#3c9440" stroke="#1d5e1d" />
          <path d="M3 10H7V19H3Z" fill="#8fc48a" />
          <path d="M13 10H16V19H13Z" fill="#5aa95a" />
          <path d="M9 7L13 3V17L9 21Z" fill="#f3d6c8" fillOpacity="0.800" stroke="#d8481c" strokeWidth="1.200" />
          <path d="M9 1V24" stroke="#8e3a1c" />
        </Icon>
      )
    case 'copy':
      return (
        <Icon size={24} box={24}>
          <rect x="2.500" y="1" width="8.500" height="11" rx="4" fill="#f6f6f6" stroke="#444" strokeWidth="1.300" />
          <rect x="12.500" y="11" width="9" height="11" rx="4" fill="#f6f6f6" stroke="#444" strokeWidth="1.300" />
          <path d="M4 14V18H9M7 15L10.500 18L7 21" stroke="#1a80d8" strokeWidth="2" />
        </Icon>
      )
    case 'mirror':
      return (
        <Icon size={24} box={24}>
          <path d="M3 2L9 7V16L3 21Z" fill="#f1f1f1" stroke="#333" strokeWidth="1.500" />
          <path d="M21 2L15 7V16L21 21Z" fill="#8db5e2" stroke="#2e4c74" strokeWidth="1.500" />
          <path d="M12 1V22M9.500 12H14.500" stroke="#444" strokeWidth="1.300" />
        </Icon>
      )
    case 'move':
      return (
        <Icon size={24} box={24}>
          <circle cx="12" cy="12" r="2" fill="#fff" stroke="#333" strokeWidth="1.400" />
          <path d="M12 1L16 5.500H13V8.500H11V5.500H8ZM12 23L8 18.500H11V15.500H13V18.500H16ZM1 12L5.500 8V11H8.500V13H5.500V16ZM23 12L18.500 16V13H15.500V11H18.500V8Z" fill="#3a3a3a" />
        </Icon>
      )
    default:
      return (
        <Icon size={24} box={24}>
          <path d="M1.500 7L5 2H14V17L10.500 22H1.500Z" fill="#8fbaea" />
          <path d="M1.500 7L5 2H14L10.500 7Z" fill="#dcebfa" />
          <path d="M10.500 7L14 2V17L10.500 22Z" fill="#5d8fce" />
          <path d="M1.500 18H10.500L14 13.500V17L10.500 22H1.500Z" fill="#d9dde3" />
          <path d="M1.500 7L5 2H14V17L10.500 22H1.500Z" stroke="#35557d" strokeWidth="1.300" strokeLinejoin="round" />
          <path d="M19 21.500V4" stroke="#3a3a3a" strokeWidth="1.300" />
          <path d="M15.500 6L19 2L22.500 6Z" fill="#3a3a3a" />
        </Icon>
      )
  }
}

const transport = [
  { label: 'Go to start', d: 'M1.500 0V19H3V0ZM17 1V18L4 9.500Z' },
  { label: 'Step back', d: 'M0 9.500L14 1V18ZM15 5H17V14H15Z' },
  { label: 'Play', d: 'M1 -1L17 9.500L1 20Z' },
  { label: 'Step forward', d: 'M17 9.500L4 1V18ZM0 5H2.500V14H0Z' },
  { label: 'Go to end', d: 'M1 1V18L14 9.500ZM15.500 0V19H17V0Z' },
]

function Timeline() {
  return (
    <section className="shrink-0 border-t border-[#c4c4c4] bg-[#cccccc]">
      <div className="mt-0.5 ml-[5px] flex h-[11px] bg-[#dcdcdc] pr-[105px]">
        <div className="ml-auto h-[10px] w-[368px] rounded-[4px] bg-[#8f8f8f]" />
      </div>
      <div className="flex h-[53px] items-start">
        <div className="flex w-[190px] shrink-0 gap-4 pt-[10px] pl-[15px]">
          {transport.map((t) => (
            <button key={t.label} aria-label={t.label}>
              <svg className="overflow-visible" width="17" height="19" viewBox="0 0 17 19" fill="#4a4a4a">
                <path d={t.d} />
              </svg>
            </button>
          ))}
        </div>
        <div className="relative flex border-b-[3px] border-[#666]">
          {timeline.map((kind, i) => (
            <div key={i} className="flex w-8 flex-col items-center pt-[6px]">
              <button
                aria-label={`${kind} ${i + 1}`}
                className={`grid h-8 w-8 place-items-center rounded-xs ${i === 0 ? 'bg-[#e6ea00]' : ''}`}
              >
                <Feature kind={kind} />
              </button>
              <span className="ml-0.5 h-[5px] w-[3px] bg-[#666]" />
            </div>
          ))}
          <span className="absolute -bottom-[3px] -left-[7px] w-4 border-b-[3px] border-dashed border-[#666]" />
          <svg className="absolute top-[3px] -right-2" width="16" height="43" viewBox="0 0 16 43" fill="#626262">
            <path d="M0 0H16V6L9.500 12V43H7V12L0 6Z" />
          </svg>
        </div>
        <button aria-label="Timeline settings" className="mt-[11px] mr-[5px] ml-auto">
          <svg width="22" height="22" viewBox="-11 -11 22 22">
            <path d={GEAR} fill="#5b5b5b" stroke="#5b5b5b" />
            <circle r="5" fill="#cccccc" />
            <circle r="3" fill="#5b5b5b" />
            <circle r="1.200" fill="#cccccc" />
          </svg>
        </button>
      </div>
    </section>
  )
}

export default function App() {
  return (
    <div className="flex h-screen flex-col overflow-hidden bg-[#ececec] font-['Noto_Sans','Open_Sans',sans-serif]">
      <Defs />
      <MenuBar />
      <TitleBar />
      <QuickBar />
      <Tabs />
      <main className="relative flex min-h-0 flex-1 flex-col items-start px-[6px] pt-[6px] pb-[6px]">
        <Model />
        <div className="relative"><Ribbon /></div>
        <div className="relative mt-[5px]"><Browser /></div>
        <section className="relative mt-auto w-[400px]">
          <PanelHeader title="COMMENTS" />
        </section>
        <ViewCube />
        <NavBar />
      </main>
      <Timeline />
      <footer className="flex h-[30px] shrink-0 items-center gap-4 border-t border-l border-[#a0a0a0] bg-linear-to-b from-[#cfcfcf] to-[#c2c2c2] pl-2 text-[15px] text-[#5c5c5c]">
        <button aria-label="Expand text commands"><RoundToggle /></button>
        <h2>TEXT COMMANDS</h2>
      </footer>
    </div>
  )
}
